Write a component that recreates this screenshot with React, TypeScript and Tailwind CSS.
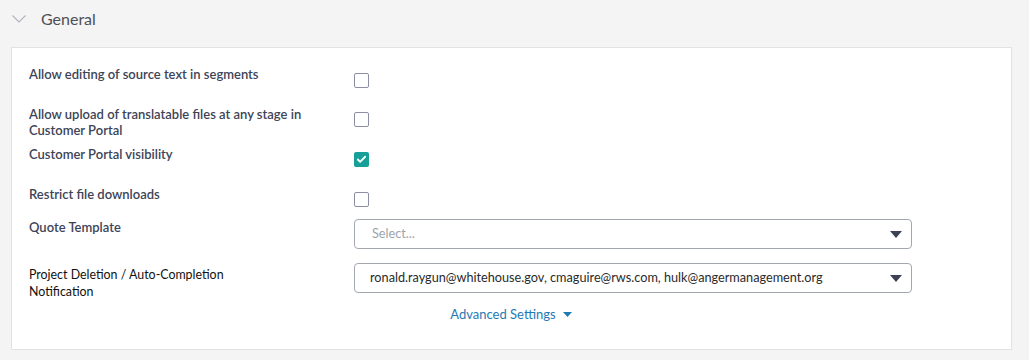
import { Check } from "lucide-react";

const font = { fontFamily: "Lato, 'Open Sans', sans-serif" };

function Box({ checked }: { checked?: boolean }) {
  if (checked) {
    return (
      <div className="flex size-[15px] items-center justify-center rounded-[2px] bg-[#17a098]">
        <Check className="size-[11px] text-white" strokeWidth={4} />
      </div>
    );
  }
  return <div className="size-[15px] rounded-[2px] border border-[#8c8fa3] bg-white" />;
}

function Caret() {
  return (
    <svg width="12" height="7" viewBox="0 0 12 7">
      <path d="M0 0h12L6 7z" fill="#3c4254" />
    </svg>
  );
}

function SelectBox({ value, placeholder }: { value?: string; placeholder?: string }) {
  return (
    <div className="flex h-[30px] w-[558px] items-center justify-between rounded-[4px] border border-[#a3a7ae] bg-white pl-[15px] pr-[9px] text-[12.7px]">
      {value ? (
        <span className="text-[#2a2a2a]">{value}</span>
      ) : (
        <span className="pl-[2px] text-[#9ea3ab]">{placeholder}</span>
      )}
      <Caret />
    </div>
  );
}

const checkRows = [
  { label: "Allow editing of source text in segments", checked: false, h: "h-[40px]" },
  { label: "Allow upload of translatable files at any stage in Customer Portal", checked: false, h: "h-[40px]" },
  { label: "Customer Portal visibility", checked: true, h: "h-[40px]" },
  { label: "Restrict file downloads", checked: false, h: "h-[33px]" },
];

export default function App() {
  return (
    <div className="min-h-[360px] bg-[#f4f4f4] pl-[11px] pr-[17px] pt-[7px]" style={font}>
      <div className="flex h-[24px] items-center">
        <svg width="14" height="8" viewBox="0 0 14 8" className="ml-[1px]">
          <path d="M0.5 0.5L7 7L13.5 0.5" fill="none" stroke="#b0b3bd" strokeWidth="1.1" />
        </svg>
        <span className="ml-[15px] text-[16px] text-[#4d4f55]">General</span>
      </div>
      <div className="mt-[16px] h-[303px] border border-[#e2e2e2] bg-white pl-[17px] pt-[18px]">
        {checkRows.map((r, i) => (
          <div key={r.label} className={`flex items-start ${r.h}`}>
            <div className="w-[308px] text-[13px] font-semibold leading-[16px] text-[#3d4457]">{r.label}</div>
            <div className={`ml-[17px] ${i === 0 ? "mt-[7px]" : "mt-[6px]"}`}>
              <Box checked={r.checked} />
            </div>
          </div>
        ))}
        <div className="flex h-[44px] items-start">
          <div className="w-[325px] text-[13px] font-semibold leading-[16px] text-[#3d4457]">Quote Template</div>
          <SelectBox placeholder="Select..." />
        </div>
        <div className="flex items-start">
          <div className="mt-[3px] w-[325px] text-[12.4px] leading-[17px] text-[#111]">
            Project Deletion / Auto-Completion
            <br />
            Notification
          </div>
          <SelectBox value="ronald.raygun@whitehouse.gov, cmaguire@rws.com, hulk@angermanagement.org" />
        </div>
        <div className="mt-[6px] flex items-center justify-center pr-[18px] text-[13px] leading-[16px] text-[#1f7ab4]">
          <span>Advanced Settings</span>
          <svg width="9" height="5" viewBox="0 0 9 5" className="ml-[7px]">
            <path d="M0 0h9L4.5 5z" fill="#1f7ab4" />
          </svg>
        </div>
      </div>
    </div>
  );
}
